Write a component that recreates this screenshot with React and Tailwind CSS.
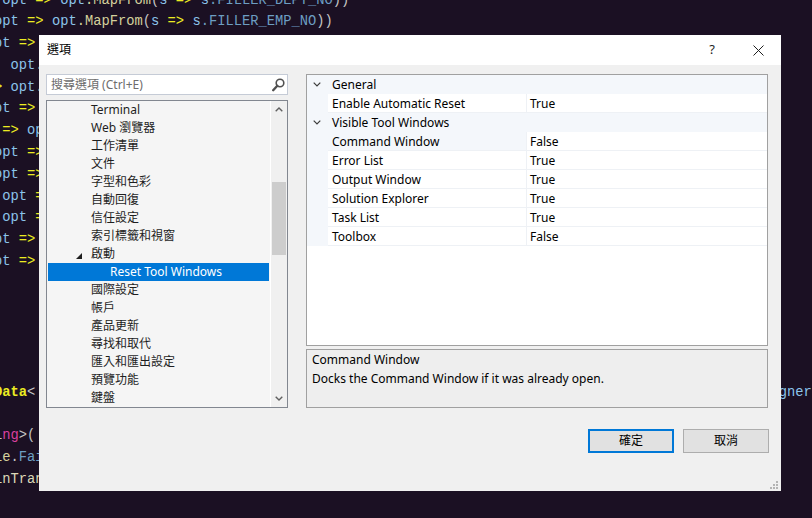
import React from 'react'

const B = 'text-[#8cc4ea]'
const Y = 'text-[#ecec22]'
const K = 'text-[#d4d09c]'
const S = 'text-[#6d9ec2]'
const G = 'text-[#c4c4c4]'
const M = 'text-[#d8409f]'
const C = 'text-[#dcd8b8]'

const mapLine = (pad, field) => [
  [' '.repeat(pad), G],
  ['opt', B],
  [' ', G],
  ['=>', Y],
  [' ', G],
  ['opt', B],
  ['.MapFrom', K],
  ['(', G],
  ['s', B],
  [' ', G],
  ['=>', Y],
  [' ', G],
  ['s', B],
  ['.' + field, S],
  ['))', G],
]

const codeLines = [
  mapLine(3, 'FILLER_DEPT_NO'),
  mapLine(2, 'FILLER_EMP_NO'),
  mapLine(1, 'FILLER_NAME'),
  [['    ', G], ['opt', B], ['.MapFrom', K], ['(', G], ['s', B], [' => ', Y], ['s', B], ['.DEPT_NAME', S], ['))', G]],
  [[' ', G], ['=>', Y], [' ', G], ['opt', B], ['.MapFrom', K], ['(', G], ['s', B], [' => ', Y], ['s', B], ['.EMP_NAME', S], ['))', G]],
  mapLine(1, 'APPLY_DATE'),
  [['pt', B], [' ', G], ['=>', Y], [' ', G], ['opt', B], ['.MapFrom', K], ['(', G], ['s', B], ['.STATUS', S], ['))', G]],
  mapLine(2, 'CREATE_USER'),
  mapLine(2, 'CREATE_DATE'),
  mapLine(3, 'UPDATE_USER'),
  mapLine(3, 'UPDATE_DATE'),
  mapLine(1, 'REMARK'),
  mapLine(1, 'FLOW_ID'),
  [],
  [],
  [],
  [],
  [],
  [['  ', G], ['Data', Y + ' font-bold'], ['<', G], [' '.repeat(86), G], ['Designer', B]],
  [],
  [['tri', G], ['ng', M], ['>(', G]],
  [['Ru', K], ['le', K], ['.', G], ['Fail', S]],
  [['MainTransaction', C]],
]

const treeItems = [
  { label: 'Terminal' },
  { label: 'Web 瀏覽器' },
  { label: '工作清單' },
  { label: '文件' },
  { label: '字型和色彩' },
  { label: '自動回復' },
  { label: '信任設定' },
  { label: '索引標籤和視窗' },
  { label: '啟動', open: true },
  { label: 'Reset Tool Windows', child: true, selected: true },
  { label: '國際設定' },
  { label: '帳戶' },
  { label: '產品更新' },
  { label: '尋找和取代' },
  { label: '匯入和匯出設定' },
  { label: '預覽功能' },
  { label: '鍵盤' },
]

const grid = [
  { cat: 'General', rows: [['Enable Automatic Reset', 'True']] },
  {
    cat: 'Visible Tool Windows',
    rows: [
      ['Command Window', 'False', true],
      ['Error List', 'True'],
      ['Output Window', 'True'],
      ['Solution Explorer', 'True'],
      ['Task List', 'True'],
      ['Toolbox', 'False'],
    ],
  },
]

function Chevron({ up }) {
  return (
    <svg width="8" height="5" viewBox="0 0 8 5">
      <path d={up ? 'M0.7 4.3 L4 1 L7.3 4.3' : 'M0.7 0.7 L4 4 L7.3 0.7'} fill="none" stroke="#606060" strokeWidth="1.4" />
    </svg>
  )
}

function TreeRow({ item }) {
  return (
    <div
      className={
        'flex h-[18px] items-center whitespace-nowrap ' +
        (item.selected ? 'bg-[#0078d7] text-white ' : 'text-[#1e1e1e] ') +
        (item.child ? 'pl-[62px]' : item.open ? 'pl-[28px]' : 'pl-[43px]')
      }
    >
      {item.open && (
        <svg width="6" height="6" viewBox="0 0 6 6" className="mr-[9px] mt-[3px]">
          <polygon points="6,0 6,6 0,6" fill="#1e1e1e" />
        </svg>
      )}
      {item.label}
    </div>
  )
}

export default function App() {
  return (
    <div className="relative h-screen w-full overflow-hidden bg-[#1b1023]">
      <div className="ml-[-22.5px] mt-[-10.5px] whitespace-pre font-['Liberation_Mono',monospace] text-[13.77px] leading-[21.8px]">
        {codeLines.map((line, i) => (
          <div key={i} className="h-[21.8px]">
            {line.map(([t, c], j) => (
              <span key={j} className={c}>
                {t}
              </span>
            ))}
          </div>
        ))}
      </div>

      <div className="absolute left-[39px] top-[35px] flex h-[456px] w-[742px] flex-col bg-[#f0f0f0] font-['Noto_Sans','Noto_Sans_CJK_TC',sans-serif] text-[12px] text-black">
        <div className="flex h-[30px] items-center bg-white">
          <span className="ml-[8px] flex-1">選項</span>
          <div className="flex h-full w-[46px] items-center justify-center text-[13px] text-[#1e1e1e]">?</div>
          <div className="flex h-full w-[46px] items-center justify-center">
            <svg width="11" height="11" viewBox="0 0 11 11">
              <path d="M0.5 0.5 L10.5 10.5 M10.5 0.5 L0.5 10.5" stroke="#1e1e1e" strokeWidth="1" />
            </svg>
          </div>
        </div>

        <div className="flex flex-1 flex-col pl-[7px] pr-[13px] pt-[9px]">
          <div className="flex gap-[18px]">
            <div className="flex w-[242px] flex-col gap-[5px]">
              <div className="flex h-[21px] items-center border border-[#c5cbd6] bg-white pl-[4px] pr-[2px]">
                <span className="flex-1 text-[#6d6d6d]">搜尋選項 (Ctrl+E)</span>
                <svg width="13" height="14" viewBox="0 0 13 14">
                  <circle cx="8" cy="5" r="3.8" fill="none" stroke="#505050" strokeWidth="1.6" />
                  <path d="M5.3 7.8 L1.2 12.2" stroke="#505050" strokeWidth="2.4" strokeLinecap="round" />
                </svg>
              </div>
              <div className="flex h-[308px] border border-[#828790] bg-[#f5f5f5]">
                <div className="flex-1 overflow-hidden px-[1px]">
                  {treeItems.map((item) => (
                    <TreeRow key={item.label} item={item} />
                  ))}
                </div>
                <div className="flex w-[17px] flex-col border-l border-white bg-[#f0f0f0]">
                  <div className="flex h-[17px] items-center justify-center">
                    <Chevron up />
                  </div>
                  <div className="flex-1">
                    <div className="mx-[1px] mt-[64px] h-[73px] bg-[#cdcdcd]" />
                  </div>
                  <div className="flex h-[17px] items-center justify-center">
                    <Chevron />
                  </div>
                </div>
              </div>
            </div>

            <div className="flex w-[462px] flex-col gap-[3px]">
              <div className="h-[272px] border border-[#a0a0a0] bg-white">
                {grid.map((g) => (
                  <div key={g.cat}>
                    <div className="flex h-[19px] items-center bg-[#f4f7fb] pl-[6px]">
                      <svg width="8" height="5" viewBox="0 0 8 5">
                        <path d="M0.7 0.7 L4 4 L7.3 0.7" fill="none" stroke="#3c3c3c" strokeWidth="1.2" />
                      </svg>
                      <span className="ml-[11px]">{g.cat}</span>
                    </div>
                    {g.rows.map(([name, value, sel]) => (
                      <div key={name} className="flex h-[19px]">
                        <div className="w-[21px] bg-[#f4f7fb]" />
                        <div
                          className={
                            'flex w-[199px] items-center border-b border-r border-[#eef1f5] pl-[4px] pt-[2px] ' +
                            (sel ? 'bg-[#f4f7fb]' : 'bg-white')
                          }
                        >
                          {name}
                        </div>
                        <div className="flex flex-1 items-center border-b border-[#eef1f5] pl-[3px] pt-[2px]">{value}</div>
                      </div>
                    ))}
                  </div>
                ))}
              </div>
              <div className="h-[59px] border border-[#a0a0a0] bg-[#eeeeee] px-[5px] pt-[1px] leading-[18.5px]">
                <div>Command Window</div>
                <div>Docks the Command Window if it was already open.</div>
              </div>
            </div>
          </div>

          <div className="mr-[-1px] mt-[21px] flex justify-end gap-[9px]">
            <div className="flex h-[24px] w-[86px] items-center justify-center border-2 border-[#0078d7] bg-[#e1e1e1]">確定</div>
            <div className="flex h-[24px] w-[86px] items-center justify-center border border-[#adadad] bg-[#e1e1e1]">取消</div>
          </div>
        </div>

        <svg width="9" height="9" viewBox="0 0 9 9" className="absolute bottom-[2px] right-[3px]">
          <rect x="7" y="1" width="2" height="2" fill="#b4b4b4" />
          <rect x="4" y="4" width="2" height="2" fill="#b4b4b4" />
          <rect x="7" y="4" width="2" height="2" fill="#b4b4b4" />
          <rect x="1" y="7" width="2" height="2" fill="#b4b4b4" />
          <rect x="4" y="7" width="2" height="2" fill="#b4b4b4" />
          <rect x="7" y="7" width="2" height="2" fill="#b4b4b4" />
        </svg>
      </div>
    </div>
  )
}
